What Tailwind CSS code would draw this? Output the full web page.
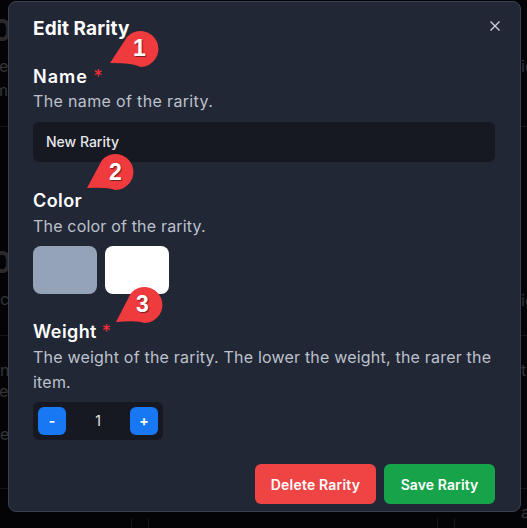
<!DOCTYPE html>
<html lang="en">
  <head>
    <meta charset="UTF-8" />
    <title>Edit Rarity</title>
    <script src="https://cdn.jsdelivr.net/npm/@tailwindcss/browser@4"></script>
  </head>
  <body class="w-[527px] h-[528px] overflow-hidden relative bg-[#040407] font-['Inter',sans-serif]">
    <!-- page behind the dialog, only the edges show -->
    <div class="absolute left-0 top-[126px] w-[527px] border-t border-[#15161b]"></div>
    <div class="absolute left-0 top-[335px] w-[527px] border-t border-[#15161b]"></div>
    <div class="absolute left-0 top-[488px] w-[527px] border-t border-[#15161b]"></div>
    <div class="absolute left-[131px] top-[518px] w-[18px] h-[10px] border-x border-[#15161b]"></div>
    <div class="absolute left-[437px] top-[518px] w-[18px] h-[10px] border-x border-[#15161b]"></div>
    <span class="absolute left-[-8px] top-[14px] text-[30px] leading-[32px] font-bold text-[#2a2a2c]">0</span>
    <span class="absolute left-[-1px] top-[56px] text-[16px] leading-[20px] text-[#333438]">e</span>
    <span class="absolute left-[-6px] top-[80px] text-[16px] leading-[20px] text-[#333438]">m</span>
    <span class="absolute left-[-8px] top-[246px] text-[30px] leading-[32px] font-bold text-[#2a2a2c]">0</span>
    <span class="absolute left-0 top-[289px] text-[16px] leading-[20px] text-[#333438]">c</span>
    <span class="absolute left-0 top-[360px] text-[16px] leading-[20px] text-[#333438]">n</span>
    <span class="absolute left-[-1px] top-[381px] text-[16px] leading-[20px] text-[#333438]">e</span>
    <span class="absolute left-0 top-[424px] text-[16px] leading-[20px] text-[#333438]">e.</span>
    <span class="absolute left-[521px] top-[56px] text-[16px] leading-[20px] text-[#333438]">ie</span>
    <span class="absolute left-[521px] top-[290px] text-[16px] leading-[20px] text-[#333438]">ig</span>
    <span class="absolute left-[521px] top-[360px] text-[16px] leading-[20px] text-[#333438]">th</span>
    <span class="absolute left-[521px] top-[502px] text-[16px] leading-[20px] text-[#333438]">a</span>

    <!-- dialog -->
    <section class="absolute left-[8px] top-[1px] w-[513px] h-[511px] rounded-lg border border-[#3a4152] bg-[#222736] pl-6 pr-[25px] pt-[13px] flex flex-col">
      <div class="flex items-center justify-between h-[28px]">
        <h2 class="text-[19px] font-bold text-white tracking-[0.1px]">Edit Rarity</h2>
        <svg class="mt-[-6px] mr-[-6px]" width="12" height="12" viewBox="0 0 12 12" fill="none" stroke="#d1d5db" stroke-width="1.3"><path d="M1.5 1.5l9 9M10.5 1.5l-9 9" /></svg>
      </div>

      <div class="mt-[21px]">
        <p class="text-[18px] font-semibold text-white leading-[26px] tracking-[1px]">Name <span class="text-red-500 font-normal">*</span></p>
        <p class="text-[16px] text-[#bdc1cc] leading-[25px] tracking-[0.35px] mt-[-1px]">The name of the rarity.</p>
        <div class="mt-[8px] h-[40px] rounded-md bg-[#161822] flex items-center px-[13px] pb-[2px] text-[14px] font-medium text-[#e5e7eb]">New Rarity</div>
      </div>

      <div class="mt-[26px]">
        <p class="text-[18px] font-semibold text-white leading-[26px] tracking-[0.4px]">Color</p>
        <p class="text-[16px] text-[#bdc1cc] leading-[25px] tracking-[0.18px]">The color of the rarity.</p>
        <div class="mt-[7px] flex gap-2">
          <div class="w-[64px] h-[48px] rounded-lg bg-[#94a3b8]"></div>
          <div class="w-[64px] h-[48px] rounded-lg bg-white"></div>
        </div>
      </div>

      <div class="mt-[25px]">
        <p class="text-[18px] font-semibold text-white leading-[26px] tracking-[0.4px]">Weight <span class="text-red-500 font-normal">*</span></p>
        <p class="text-[16px] text-[#bdc1cc] leading-[25px] tracking-[0.2px]">The weight of the rarity. The lower the weight, the rarer the item.</p>
        <div class="mt-[7px] w-[130px] h-[38px] rounded-md bg-[#161822] flex items-center justify-between px-[5px]">
          <button class="w-[28px] h-[28px] rounded-md bg-[#1877f2] text-white text-sm font-bold">-</button>
          <span class="text-sm text-[#e5e7eb]">1</span>
          <button class="w-[28px] h-[28px] rounded-md bg-[#1877f2] text-white text-sm font-bold">+</button>
        </div>
      </div>

      <div class="mt-auto mb-[7px] flex justify-end gap-2">
        <button class="h-[40px] w-[121px] rounded-md bg-[#ef4444] text-white text-[14px] font-semibold tracking-[0.2px]">Delete Rarity</button>
        <button class="h-[40px] w-[111px] rounded-md bg-[#16a34a] text-white text-[14px] font-semibold tracking-[0.1px]">Save Rarity</button>
      </div>
    </section>

    <!-- numbered callouts -->
    <svg class="absolute left-[110px] top-[30px]" width="50" height="38" viewBox="0 0 50 38"><path d="M0 33L17 7A18 18 0 1 1 30 37Q24 33 0 33Z" fill="#ef3b3d"/></svg>
    <span class="absolute left-[133px] top-[34px] font-['Liberation_Sans',sans-serif] text-[23px] font-bold text-white leading-[28px] [text-shadow:1px_1px_1px_rgba(0,0,0,0.5)]">1</span>

    <svg class="absolute left-[87px] top-[153px]" width="50" height="38" viewBox="0 0 50 38"><path d="M0 35L15 7A18 18 0 1 1 28 37Q22 34 0 35Z" fill="#ef3b3d"/></svg>
    <span class="absolute left-[109px] top-[158px] font-['Liberation_Sans',sans-serif] text-[23px] font-bold text-white leading-[28px] [text-shadow:1px_1px_1px_rgba(0,0,0,0.5)]">2</span>

    <svg class="absolute left-[116px] top-[286px]" width="50" height="38" viewBox="0 0 50 38"><path d="M0 36L15 7A18 18 0 1 1 28 37Q22 34 0 36Z" fill="#ef3b3d"/></svg>
    <span class="absolute left-[136px] top-[290px] font-['Liberation_Sans',sans-serif] text-[23px] font-bold text-white leading-[28px] [text-shadow:1px_1px_1px_rgba(0,0,0,0.5)]">3</span>
  </body>
</html>
